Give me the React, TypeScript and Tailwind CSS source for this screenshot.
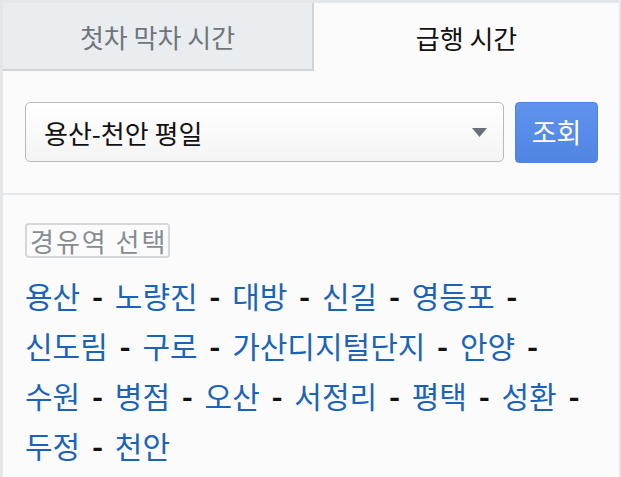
const stations = [
  "용산", "노량진", "대방", "신길", "영등포", "신도림", "구로", "가산디지털단지", "안양",
  "수원", "병점", "오산", "서정리", "평택", "성환", "두정", "천안",
];

function Tabs() {
  return (
    <div className="flex">
      <div className="flex h-[68px] w-[311px] shrink-0 items-center justify-center border-b-2 border-r-2 border-[#d0d4d8] bg-[#eaedf0] text-[26px] text-[#6f757b]">
        첫차 막차 시간
      </div>
      <div className="flex h-[68px] flex-1 items-center justify-center text-[26px] text-[#111]">
        급행 시간
      </div>
    </div>
  );
}

function RouteForm() {
  return (
    <div className="flex gap-[11px] pb-[30px] pl-[22px] pr-[21px] pt-[31px]">
      <div className="relative flex h-[60px] w-[480px] items-center rounded-[5px] border border-[#b7babd] bg-gradient-to-b from-[#ffffff] to-[#f4f4f5] pl-[18px] text-[26px] text-[#111]">
        용산-천안 평일
        <svg className="absolute right-[16px] top-[25px]" width="15" height="9" viewBox="0 0 15 9">
          <path d="M0 0 H15 L7.5 9 Z" fill="#6c7079" />
        </svg>
      </div>
      <button className="flex h-[61px] w-[83px] items-center justify-center rounded-[4px] border border-[#4f83dd] bg-gradient-to-b from-[#5f93ee] to-[#5185e2] text-[27px] text-white">
        조회
      </button>
    </div>
  );
}

function StationList() {
  return (
    <div className="pl-[22px] pr-[24px] pt-[28px]">
      <span className="inline-block rounded-[4px] border-2 border-[#d5d8db] pl-[3px] pr-[1px] text-[26px] leading-[31px] tracking-[2px] text-[#868c92]">
        경유역 선택
      </span>
      <p className="mt-[12px] break-keep text-[30px] leading-[50px]">
        {stations.map((s, i) => (
          <span key={s}>
            <span className="whitespace-nowrap">
              <a className="text-[#1b63b8]">{s}</a>
              {i < stations.length - 1 && (
                <>
                  {" "}
                  <span className="mx-[5px] font-bold text-[#111]">-</span>
                </>
              )}
            </span>{" "}
          </span>
        ))}
      </p>
    </div>
  );
}

export default function App() {
  return (
    <div className="h-[477px] w-[621px] overflow-hidden bg-[#e4e7ea] pl-[3px] pr-[2px] pt-[3px] font-['Noto_Sans_CJK_KR','Noto_Sans',sans-serif]">
      <div className="h-full bg-[#fbfbfb]">
        <Tabs />
        <RouteForm />
        <div className="h-[2px] bg-[#e5e7e9]" />
        <StationList />
      </div>
    </div>
  );
}
